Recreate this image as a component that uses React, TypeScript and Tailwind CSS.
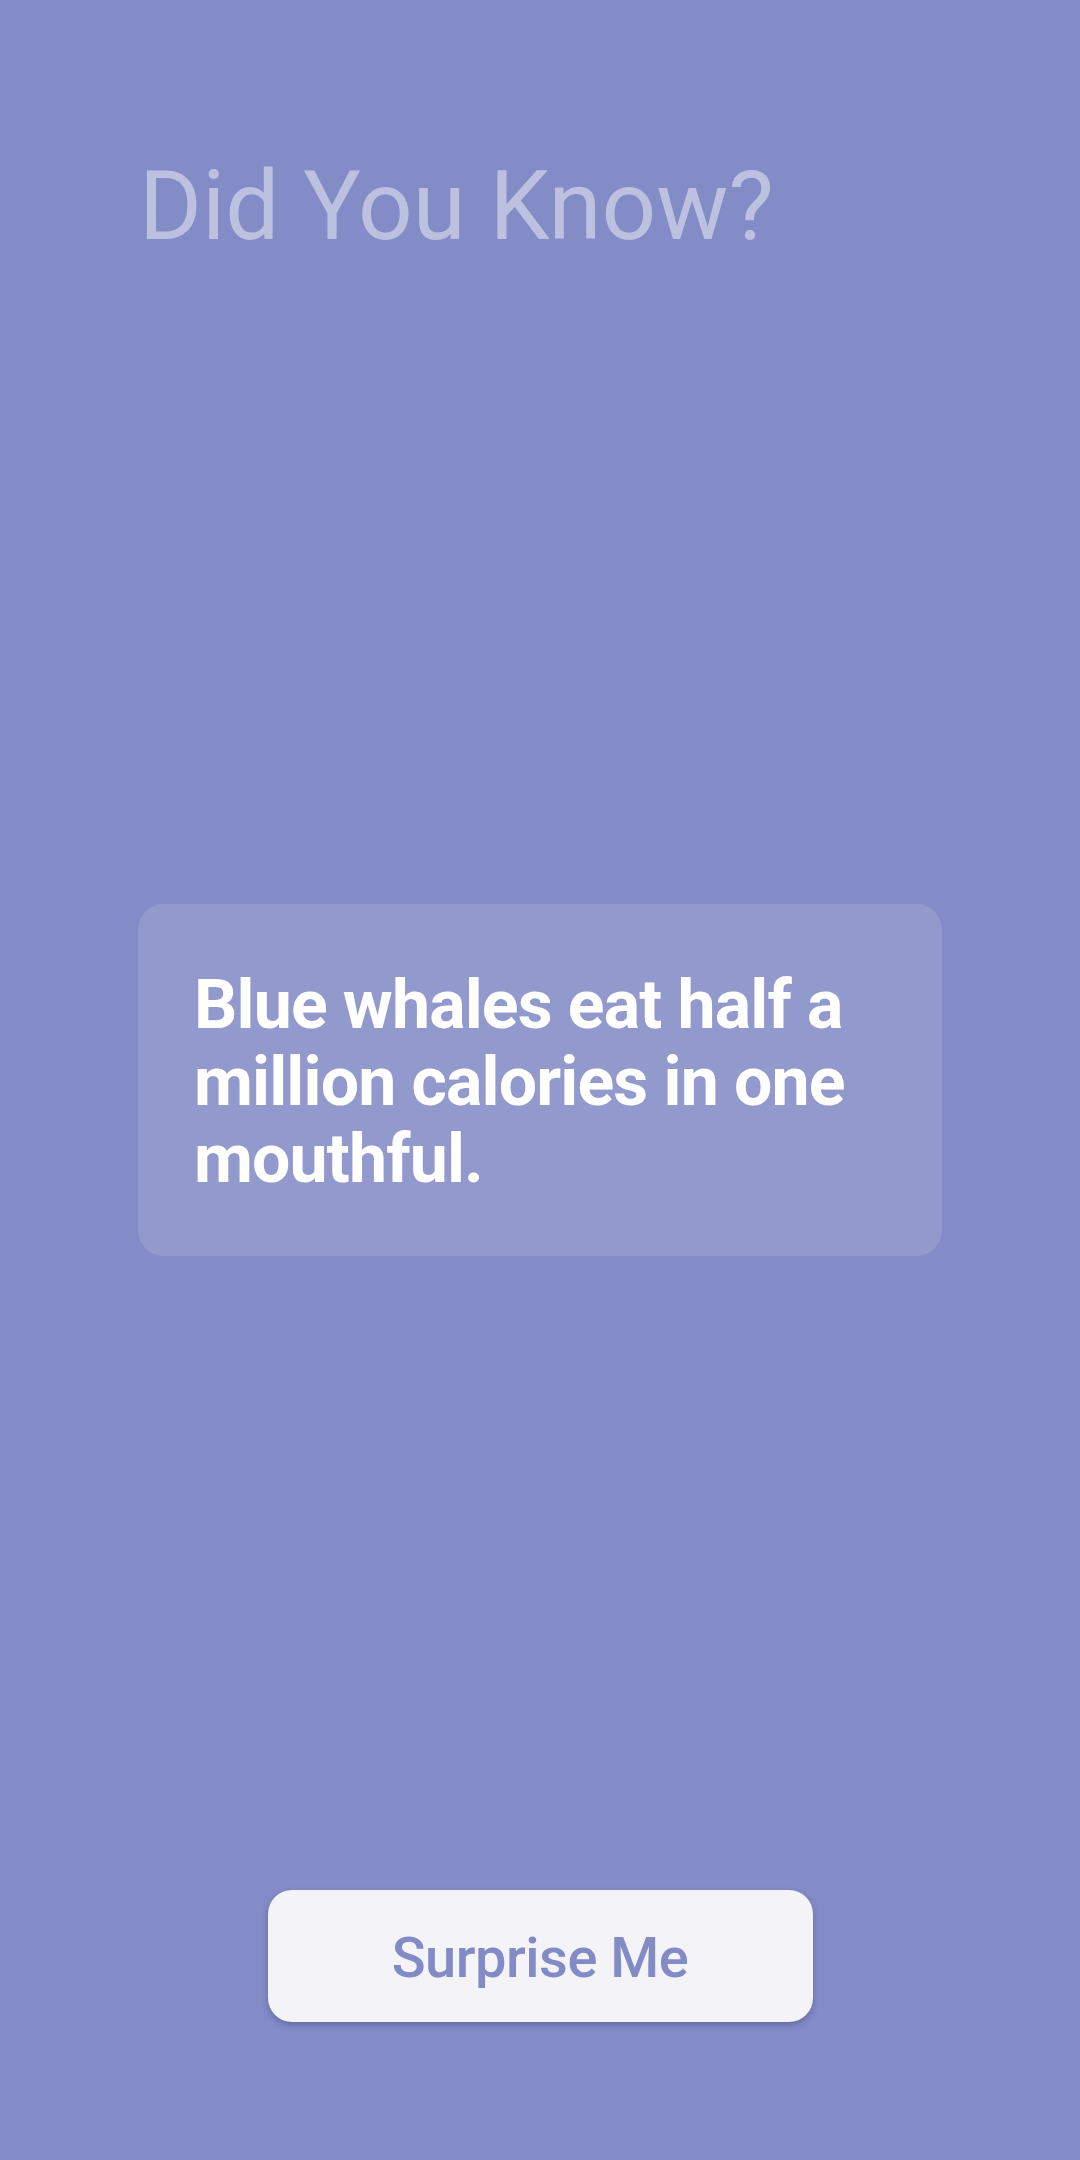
export default function App() {
  return (
    <div
      className="w-[1080px] h-[2160px] bg-[#838cc7] grid grid-rows-[1fr_auto_1fr] px-[138px]"
      style={{ fontFamily: 'Roboto, "Noto Sans", sans-serif' }}
    >
      <div className="self-start pt-[150px]">
        <h1 className="text-[96px] leading-[112px] font-normal text-[#bdc1e0] pl-[1px]">
          Did You Know?
        </h1>
      </div>
      <div className="rounded-[26px] bg-[#9199cd] pl-[56px] pr-[40px] pt-[63px] pb-[58px]">
        <p className="text-[68px] leading-[77px] font-bold tracking-[-0.85px] text-white">
          Blue whales eat half a million calories in one mouthful.
        </p>
      </div>
      <div className="self-end flex justify-center pb-[138px]">
        <button className="w-[545px] h-[132px] rounded-[24px] bg-[#f3f3f8] shadow-[0_3px_6px_rgba(40,45,100,0.35)] flex items-center justify-center pt-[3px] text-[56px] font-medium tracking-[-0.5px] text-[#838bc6]">
          Surprise Me
        </button>
      </div>
    </div>
  );
}
